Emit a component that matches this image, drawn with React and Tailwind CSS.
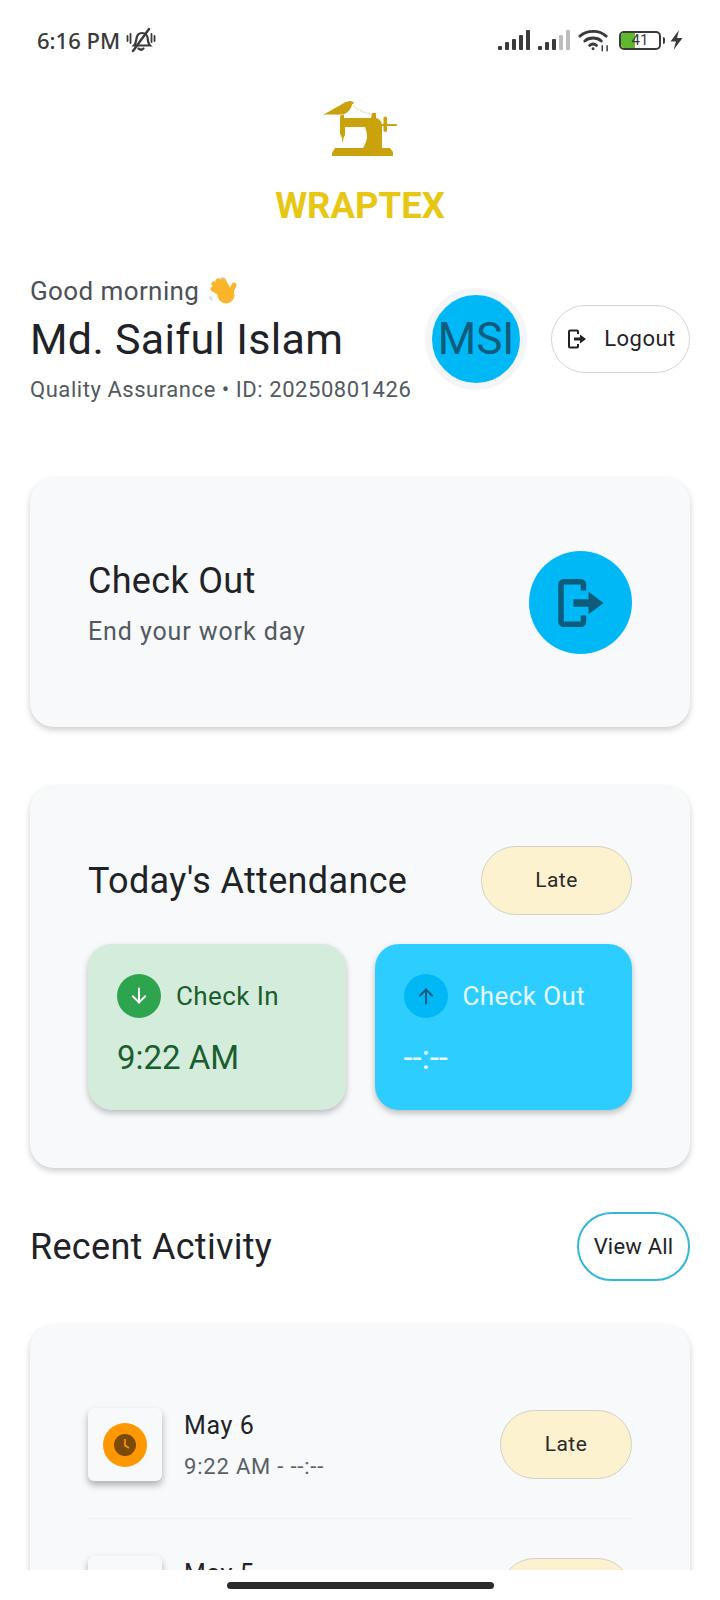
import React from 'react';

const roboto = "font-['Roboto',sans-serif]";

const SignalBars = ({ dim = 0 }) => {
  const heights = [4, 8, 11, 15, 20];
  return (
    <div className="flex items-end gap-[3px] h-[20px]">
      {heights.map((h, i) => (
        <svg key={i} width="4" height={h} className="block">
          <rect width="4" height={h} rx="1" fill={i >= heights.length - dim ? '#bdbdbd' : '#3a3a3a'} />
        </svg>
      ))}
    </div>
  );
};

const StatusBar = () => (
  <div className="h-[80px] pl-[37px] pr-[37px] flex items-start justify-between pt-[27px] font-['Noto_Sans',sans-serif] text-[#3a3a3a]">
    <div className="flex items-center gap-[6px]">
      <span className="text-[22px] leading-[26px] font-medium">6:16 PM</span>
      <svg width="30" height="26" viewBox="0 0 30 26" fill="none" stroke="#3a3a3a" strokeLinecap="round">
        <path d="M8 18.5c2-2 2-4 2.5-7 .6-3.6 3-5.5 5.5-5.5 3 0 5.5 2.4 5.7 5.5.2 3 .5 5.200 2.300 7H8z" strokeWidth="2.200" />
        <path d="M12.500 21.500c1.500 1.500 3.500 1.500 5 0" strokeWidth="2.200" />
        <path d="M7 24 23 2" strokeWidth="2.400" />
        <path d="M1.500 9v5M4.500 7v9M25.500 7v8M28.500 9v5" strokeWidth="1.800" />
      </svg>
    </div>
    <div className="flex items-center h-[26px]">
      <SignalBars />
      <div className="w-[8px]" />
      <SignalBars dim={2} />
      <svg width="33" height="24" viewBox="0 0 34 24" fill="none" stroke="#3a3a3a" strokeWidth="3" strokeLinecap="round" className="ml-[8px]">
        <path d="M2 8c7.500-6.500 20-6.500 27 0" />
        <path d="M7 13c4.500-4 12.500-4 17 0" />
        <path d="M12 17.500c2-1.500 5-1.500 7 0" />
        <circle cx="15.500" cy="21" r="1.500" fill="#3a3a3a" stroke="none" />
        <path d="M25 18v5M30 18v5" strokeWidth="1.500" />
      </svg>
      <div className="ml-[8px] w-[42px] h-[19px] rounded-[5px] border-[2px] border-[#3a3a3a] relative flex items-center overflow-hidden">
        <div className="w-[14px] h-full bg-[#5fb82e]" />
        <span className="absolute inset-0 flex items-center justify-center text-[15px] leading-none font-['Roboto',sans-serif]">41</span>
      </div>
      <div className="ml-[2px] w-[2px] h-[7px] bg-[#3a3a3a] rounded-r-sm" />
      <svg width="13" height="20" viewBox="0 0 13 20" className="ml-[5px]">
        <path d="M9 0 0.500 11.500H6L3.500 20 12.500 8H7z" fill="#3a3a3a" />
      </svg>
    </div>
  </div>
);

const Logo = () => (
  <div className="flex flex-col items-center">
    <svg width="80" height="60" viewBox="0 0 80 60" className="mt-[20px]">
      <path d="M33 5 C37 10 45 13 53 15" fill="none" stroke="#d9cfa0" strokeWidth="1" strokeDasharray="2 1" />
      <g fill="#c9a20c">
        <path d="M3 15 C8 12 13 9 17 7 C21 5 26 1 30 1 C32 1 34 2 34 3 L32 4.500 C31 9 28 13 23 14.500 C16 15 9 14 3 15z" />
        <path d="M20 17 L21 15 L24 15 L24 18 L51 18 L52 13 L56 13 L56 18 C60 19 62 22 62 26 L62 48 L43 48 C45 44 47 41 47 37 C47 33 46 30 45 27 L25 27 L25 35 L23.500 38 L22.800 43.500 L22 38 L20 34z" />
        <path d="M15 48 L70 48 L73 52 L73 56 L12 56 L12 53z" />
        <rect x="63.500" y="16.500" width="3.500" height="15.500" rx="1.700" />
        <rect x="60" y="24" width="17" height="2" rx="1" />
      </g>
    </svg>
    <div className={`${roboto} mt-[25px] text-[36.500px] leading-[42px] font-bold text-[#e6c814]`}>WRAPTEX</div>
  </div>
);

const WaveHand = () => (
  <svg width="30" height="28" viewBox="0 0 30 28" className="inline-block ml-[9px] align-[-5px]">
    <g stroke="#fbb52a" strokeWidth="5" strokeLinecap="round">
      <path d="M13 17 5 12M14 14 6 7M16 11 10 4M19 10 15 3M23 15 26 8" />
    </g>
    <circle cx="18" cy="18" r="8.500" fill="#fbb52a" />
    <path d="M12 1.500 15 1M2 20l2 3" stroke="#c9d4e6" strokeWidth="1.500" fill="none" strokeLinecap="round" />
  </svg>
);

const ExitIcon = ({ size, color, stroke }) => (
  <svg width={size} height={size} viewBox="0 0 24 24" fill="none">
    <path d="M13 7V4.500A1 1 0 0 0 12 3.500H5A1 1 0 0 0 4 4.500V19.500A1 1 0 0 0 5 20.500H12A1 1 0 0 0 13 19.500V17" stroke={color} strokeWidth={stroke} />
    <path d="M9 10.500H15V7.500L21 12L15 16.500V13.500H9z" fill={color} />
  </svg>
);

const Header = () => (
  <div className="mt-[48px] mx-[30px] flex items-center">
    <div className="w-[395px] whitespace-nowrap">
      <div className="text-[26px] leading-[32px] tracking-[0.4px] text-[#4b5157]">Good morning<WaveHand /></div>
      <div className="mt-[6px] text-[43px] leading-[52px] tracking-[0.3px] text-[#1f2327]">Md. Saiful Islam</div>
      <div className="mt-[10px] text-[22px] leading-[30px] tracking-[0.55px] text-[#53595f]">Quality Assurance • ID: 20250801426</div>
    </div>
    <div className="w-[102px] h-[102px] mb-[2px] rounded-full border-[7px] border-[#f3f5f7] bg-[#00b8f5] flex items-center justify-center text-[44px] text-[#0f5b7c] shrink-0">MSI</div>
    <button className="ml-auto mb-[3px] w-[139px] h-[68px] rounded-full border-[1.500px] border-[#d2d4d6] flex items-center justify-center gap-[15px] text-[22px] tracking-[0.5px] text-[#1f2327] bg-white">
      <ExitIcon size={24} color="#1f2327" stroke={2} />
      Logout
    </button>
  </div>
);

const Card = ({ className, children }) => (
  <div className={`mx-[30px] rounded-[24px] bg-[#f7f9fb] shadow-[0_3px_6px_rgba(0,0,0,0.2)] ${className}`}>{children}</div>
);

const Pill = ({ className }) => (
  <div className={`h-[69px] rounded-full bg-[#fdf2cf] border-[1.500px] border-[#d3d1c6] flex items-center justify-center text-[21px] tracking-[0.4px] text-[#2b2b2b] ${className}`}>Late</div>
);

const TimeCard = ({ bg, title, time, circle, arrow, iconColor, textColor, shadow }) => (
  <div className={`flex-1 h-[166px] rounded-[24px] pt-[30px] pl-[29px] ${bg} ${shadow}`}>
    <div className="flex items-center gap-[15px]">
      <div className={`w-[44px] h-[44px] rounded-full flex items-center justify-center ${circle}`}>
        <svg width="22" height="22" viewBox="0 0 24 24" fill="none" stroke={iconColor} strokeWidth="2.200" strokeLinecap="square">
          {arrow === 'down' ? <path d="M12 4v15M5.500 12.500 12 19l6.500-6.500" /> : <path d="M12 20V5M5.500 11.500 12 5l6.500 6.500" />}
        </svg>
      </div>
      <span className={`text-[26px] tracking-[0.4px] ${textColor}`}>{title}</span>
    </div>
    <div className={`mt-[18px] text-[33px] leading-[44px] ${textColor}`}>{time}</div>
  </div>
);

const ActivityRow = ({ date, time }) => (
  <div className="flex items-center">
    <div className="w-[74px] h-[73px] rounded-[6px] bg-[#f8f9fa] shadow-[0_4px_7px_rgba(0,0,0,0.3)] flex items-center justify-center shrink-0">
      <div className="w-[44px] h-[44px] rounded-full bg-[#ff9800] flex items-center justify-center">
        <svg width="24" height="24" viewBox="0 0 24 24">
          <circle cx="12" cy="12" r="11" fill="#7a4a06" />
          <path d="M12 6v6.500l4 2.500" fill="none" stroke="#ff9800" strokeWidth="1.600" />
        </svg>
      </div>
    </div>
    <div className="ml-[22px] flex-1 pt-[2px]">
      <div className="text-[25px] leading-[34px] tracking-[0.6px] text-[#1f2327]">{date}</div>
      <div className="mt-[9px] h-[30px] text-[22px] leading-[30px] tracking-[0.8px] text-[#5a6066]">{time}</div>
    </div>
    <Pill className="w-[132px]" />
  </div>
);

export default function App() {
  return (
    <div className={`${roboto} w-[720px] h-[1600px] bg-white flex flex-col overflow-hidden`}>
      <div className="h-[1570px] overflow-hidden shrink-0">
        <StatusBar />
        <Logo />
        <Header />

        <Card className="mt-[73px] h-[249px] pl-[58px] pr-[58px] flex items-center justify-between">
          <div className="pt-[2px]">
            <div className="text-[36px] leading-[44px] tracking-[0.3px] text-[#1f2327]">Check Out</div>
            <div className="mt-[13px] text-[25px] leading-[32px] tracking-[0.9px] text-[#53595f]">End your work day</div>
          </div>
          <div className="w-[103px] h-[103px] rounded-full bg-[#00b8f5] flex items-center justify-center">
            <ExitIcon size={60} color="#0f5b7c" stroke={2.200} />
          </div>
        </Card>

        <Card className="mt-[59px] h-[382px] px-[58px] pt-[60px]">
          <div className="flex items-center justify-between">
            <div className="text-[36px] tracking-[0.35px] text-[#1f2327]">Today's Attendance</div>
            <Pill className="w-[151px]" />
          </div>
          <div className="mt-[29px] flex gap-[29px]">
            <TimeCard bg="bg-[#d4ecdb]" title="Check In" time="9:22 AM" circle="bg-[#2ea44f]" arrow="down" iconColor="#ffffff" textColor="text-[#1b5e2e]" shadow="shadow-[0_3px_6px_rgba(0,0,0,0.25)]" />
            <TimeCard bg="bg-[#2ecdff]" title="Check Out" time="--:--" circle="bg-[#00b8f5]" arrow="up" iconColor="#0f5b7c" textColor="text-[#e6faff]" shadow="shadow-[0_3px_6px_rgba(0,0,0,0.25)]" />
          </div>
        </Card>

        <div className="mt-[44px] mx-[30px] flex items-center justify-between">
          <div className="text-[36px] tracking-[0.3px] text-[#1f2327]">Recent Activity</div>
          <button className="w-[113px] h-[69px] rounded-full border-[2px] border-[#35b6d6] bg-white flex items-center justify-center text-[22px] tracking-[0.2px] text-[#1f2327]">View All</button>
        </div>

        <Card className="mt-[44px] h-[400px] px-[58px] pt-[82px]">
          <ActivityRow date="May 6" time="9:22 AM - --:--" />
          <div className="mt-[36px] mb-[36px] h-px bg-[#eef0f2]" />
          <ActivityRow date="May 5" />
        </Card>
      </div>
      <div className="flex-1 flex justify-center pt-[12px]">
        <div className="w-[267px] h-[7px] rounded-full bg-[#2b2b2b]" />
      </div>
    </div>
  );
}
